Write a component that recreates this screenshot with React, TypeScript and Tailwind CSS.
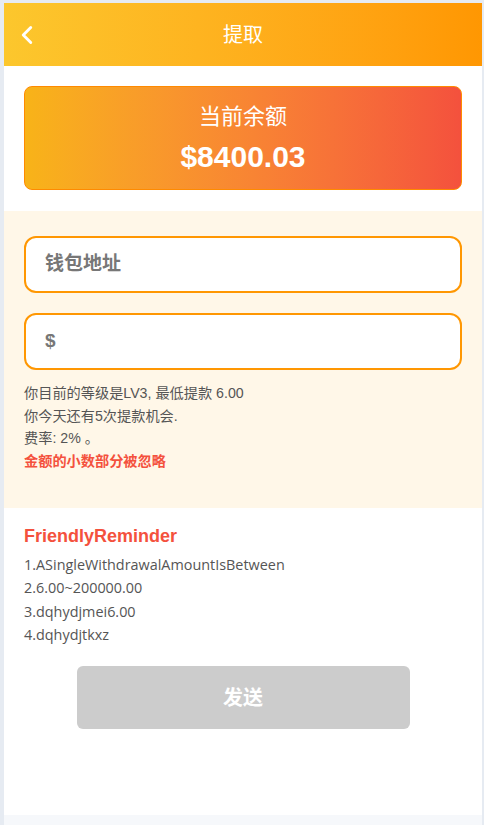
import { ChevronLeft } from 'lucide-react';

const sans = "font-['Liberation_Sans','Noto_Sans_CJK_SC',sans-serif]";

const reminders = [
  '1.ASingleWithdrawalAmountIsBetween',
  '2.6.00~200000.00',
  '3.dqhydjmei6.00',
  '4.dqhydjtkxz',
];

export default function App() {
  return (
    <div className={`min-h-[825px] w-[484px] bg-[#e6ebf2] pt-[3px] pl-[4px] pr-[2px] ${sans}`}>
      <div className="flex h-[812px] flex-col bg-white">
        <header className="relative flex h-[63px] items-center justify-center bg-gradient-to-r from-[#fcc72d] to-[#ff9702]">
          <ChevronLeft className="absolute left-[8px] h-[30px] w-[30px] text-white" strokeWidth={2.3} />
          <h1 className="text-[20px] text-white">提取</h1>
        </header>

        <div className="px-5 pt-5 pb-[21px]">
          <div className="flex h-[104px] flex-col items-center justify-center rounded-lg border border-[#ff8a00] bg-gradient-to-r from-[#f8b318] to-[#f4513d] text-white">
            <div className="text-[22px] leading-[30px]">当前余额</div>
            <div className="mt-[8px] text-[30px] font-bold leading-[34px]">$8400.03</div>
          </div>
        </div>

        <div className="bg-[#fff7e8] px-5 pt-[25px] pb-[36px]">
          <div className="flex h-[57px] items-center rounded-xl border-2 border-[#ff9702] bg-white px-[19px] text-[19px] font-bold text-[#777]">
            钱包地址
          </div>
          <div className="mt-[20px] flex h-[57px] items-center rounded-xl border-2 border-[#ff9702] bg-white px-[19px] text-[19px] font-bold text-[#777]">
            $
          </div>
          <div className="mt-[12px] text-[14.2px] leading-[22.5px] text-[#555]">
            <p>你目前的等级是LV3, 最低提款 6.00</p>
            <p>你今天还有5次提款机会.</p>
            <p>费率: 2% 。</p>
            <p className="font-bold text-[#f4513d]">金额的小数部分被忽略</p>
          </div>
        </div>

        <div className="px-5 pt-[16px]">
          <h2 className="text-[18px] font-bold leading-[24px] text-[#f4513d]">FriendlyReminder</h2>
          <ul className="mt-[5px] font-['Open_Sans',sans-serif] text-[14.4px] leading-[23.3px] text-[#555]">
            {reminders.map((r) => (
              <li key={r}>{r}</li>
            ))}
          </ul>
          <div className="mt-[20px] flex justify-center">
            <button className="h-[63px] w-[333px] rounded-md bg-[#cccccc] text-[20px] font-bold text-white">
              发送
            </button>
          </div>
        </div>
      </div>
      <div className="h-[10px] bg-[#f6f8fb]" />
    </div>
  );
}
